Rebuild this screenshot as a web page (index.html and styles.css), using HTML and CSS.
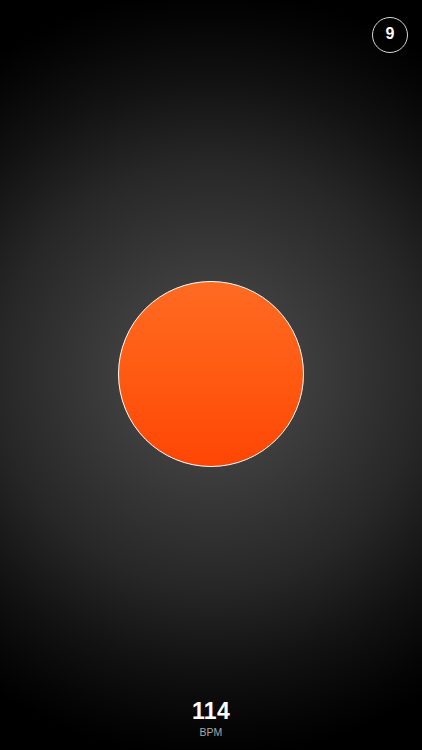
FILE: index.html
```html
<!DOCTYPE html>
<html>
<head>
<meta charset="utf-8">
<link rel="stylesheet" href="styles.css">
</head>
<body>
<div class="screen">
  <div class="top">
    <div class="badge">9</div>
  </div>
  <div class="center">
    <div class="beat"></div>
  </div>
  <div class="bottom">
    <div class="bpm">114</div>
    <div class="unit">BPM</div>
  </div>
</div>
</body>
</html>
```
FILE: styles.css
```css
html, body {
  margin: 0;
  padding: 0;
  background: #000;
}
.screen {
  width: 422px;
  height: 750px;
  display: grid;
  grid-template-columns: 1fr;
  grid-template-rows: 1fr;
  background: radial-gradient(circle 385px at 211px 374px, #484848 0%, #3d3d3d 25%, #272727 55%, #121212 76%, #050505 92%, #000 100%);
  font-family: "Liberation Sans", Arial, sans-serif;
  overflow: hidden;
}
.top, .center, .bottom {
  grid-area: 1 / 1;
}
.top {
  align-self: start;
  display: flex;
  justify-content: flex-end;
  padding: 17px 14px 0 0;
}
.badge {
  width: 34px;
  height: 32px;
  padding-bottom: 2px;
  border: 1.5px solid #d8d8d8;
  border-radius: 50%;
  color: #fff;
  font-weight: bold;
  font-size: 16px;
  line-height: 1;
  display: flex;
  align-items: center;
  justify-content: center;
}
.center {
  align-self: center;
  justify-self: center;
  margin-top: -2px;
}
.beat {
  width: 184px;
  height: 184px;
  border-radius: 50%;
  border: 1.5px solid #fff;
  background: linear-gradient(to bottom, #ff6b22 0%, #ff5a12 50%, #ff4605 100%);
}
.bottom {
  align-self: end;
  justify-self: center;
  text-align: center;
  padding-bottom: 12px;
}
.bpm {
  color: #fff;
  font-weight: bold;
  font-size: 23px;
  line-height: 22px;
  letter-spacing: 0.3px;
}
.unit {
  color: #a8a8a8;
  font-size: 10.5px;
  line-height: 12px;
  margin-top: 4px;
}
```
